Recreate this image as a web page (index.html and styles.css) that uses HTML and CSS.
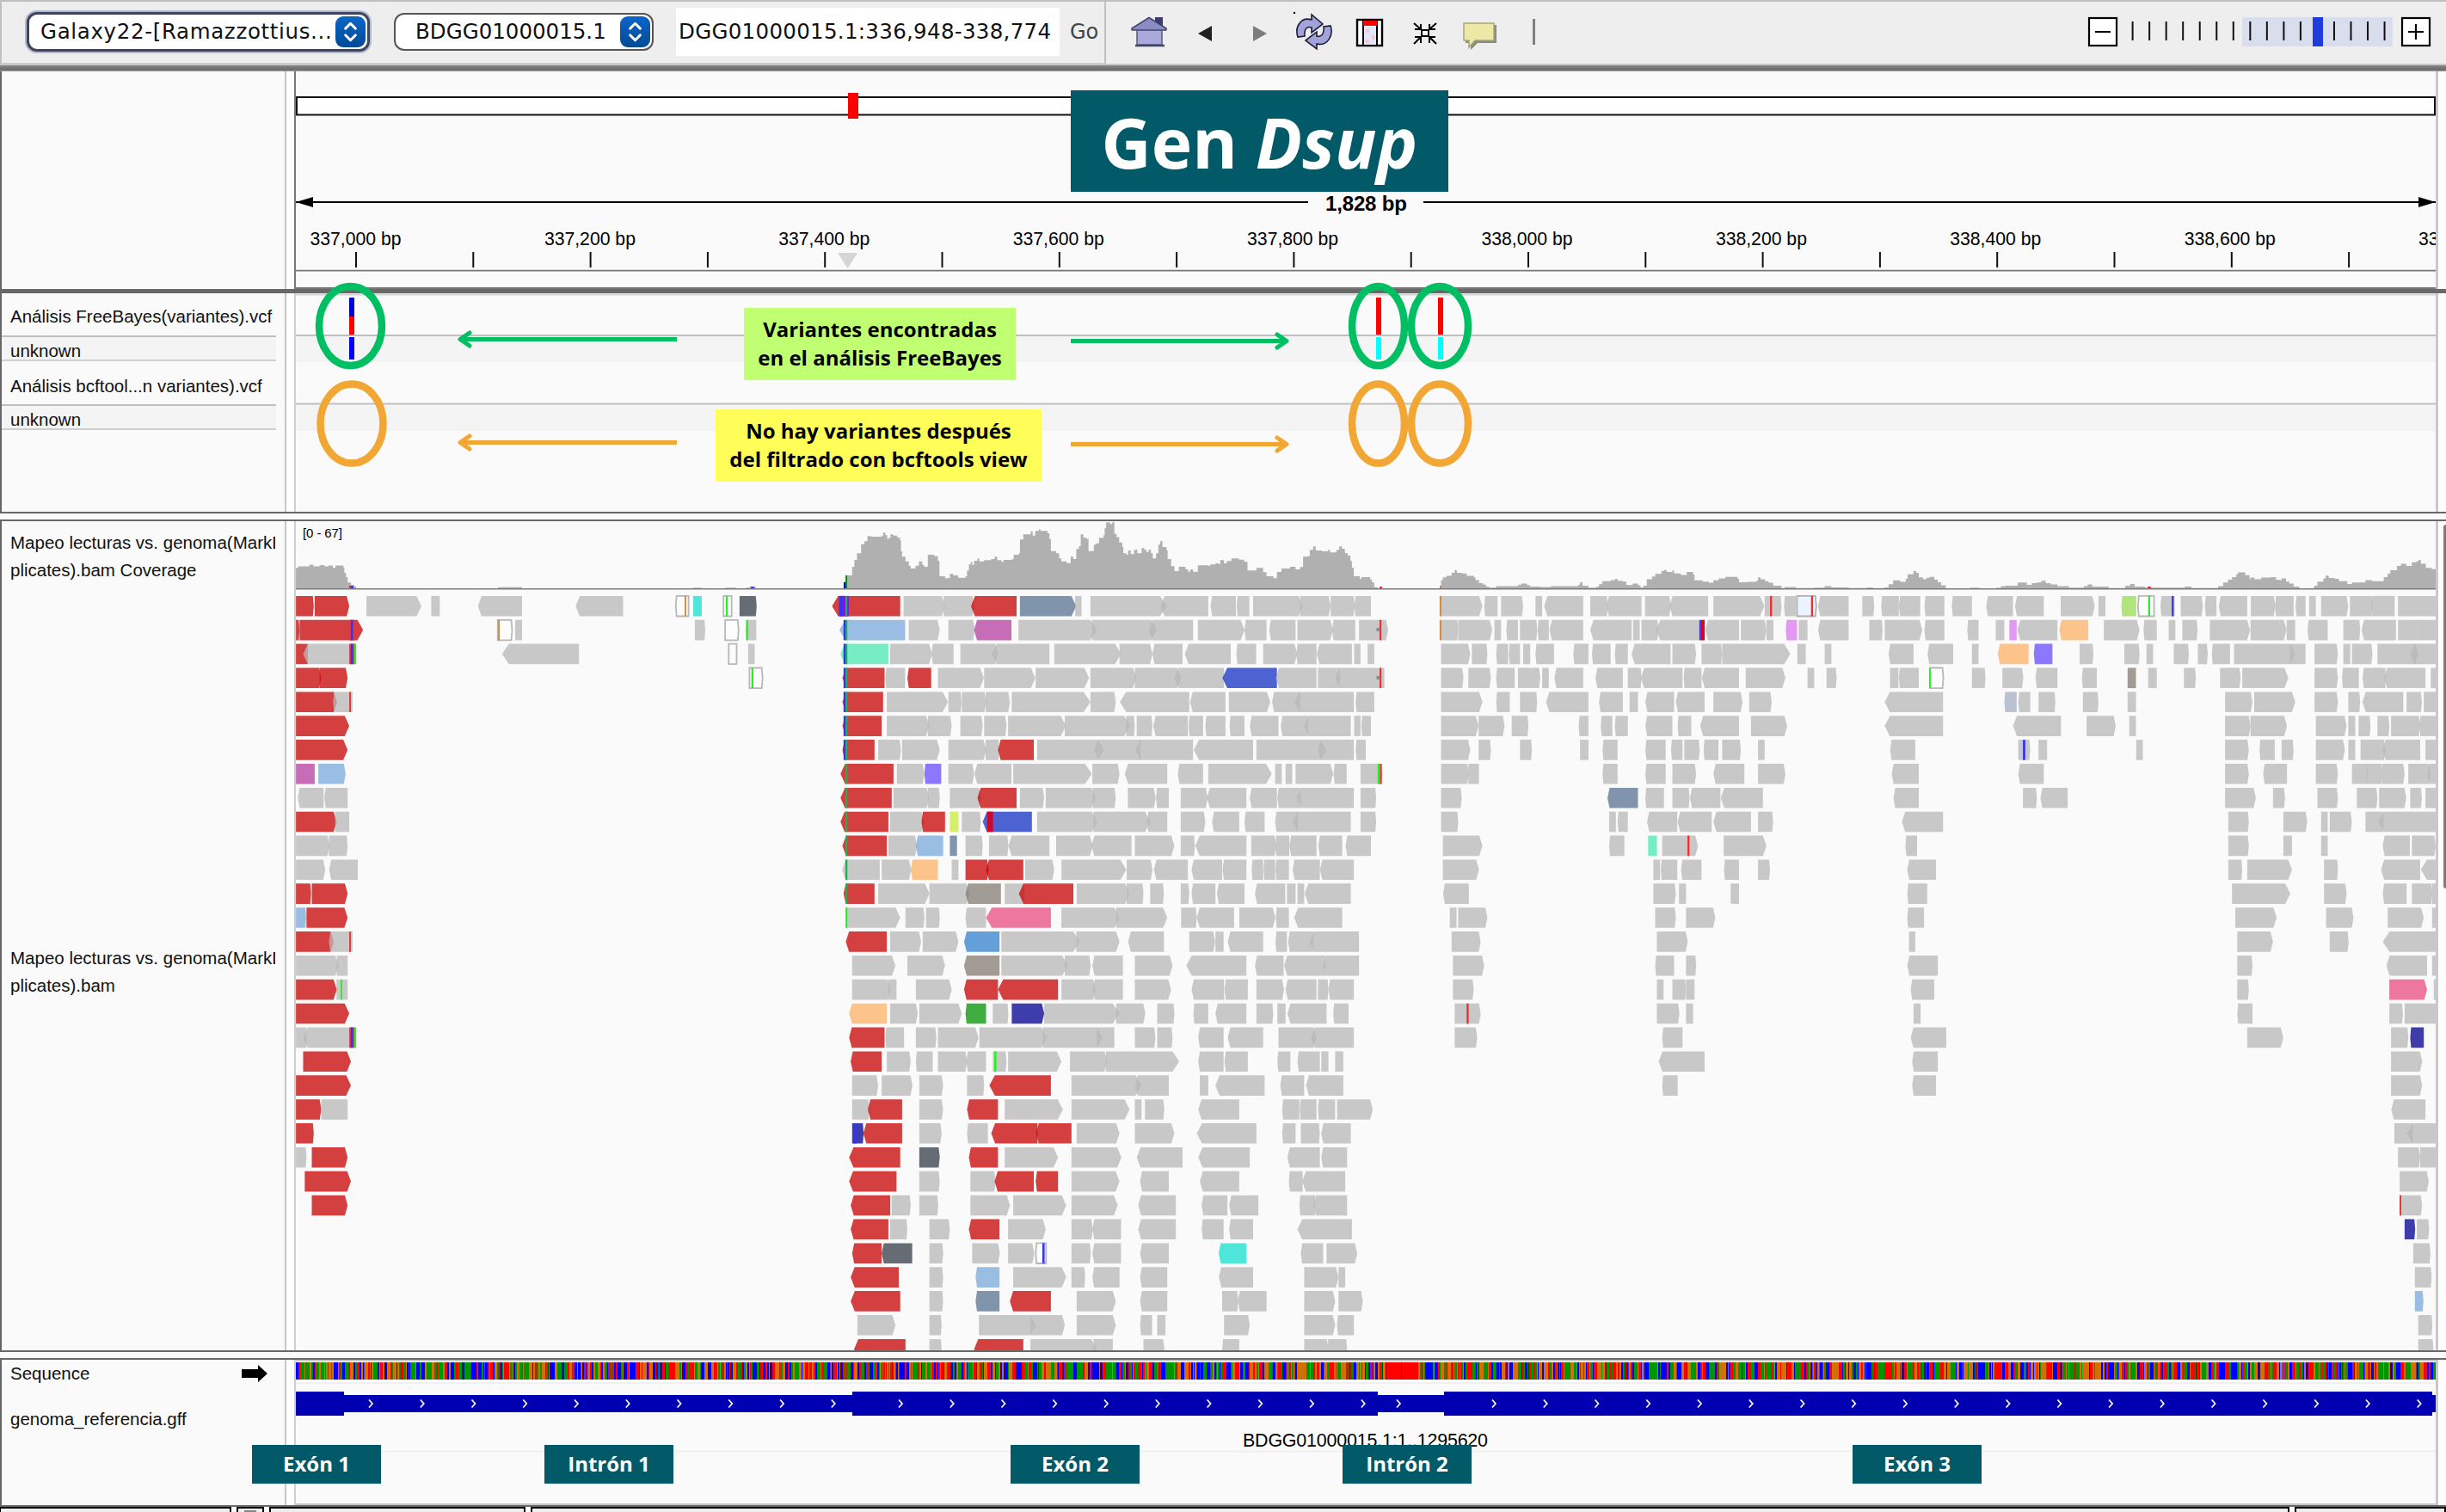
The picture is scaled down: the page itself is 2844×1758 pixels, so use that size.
FILE: index.html
```html
<!DOCTYPE html>
<html lang="es">
<head>
<meta charset="utf-8">
<title>IGV - Gen Dsup</title>
<link rel="stylesheet" href="styles.css">
</head>
<body>
<header class="toolbar">
  <div class="locator">
    <div class="combo combo-genome"><span class="combo-text genome-text">Galaxy22-[Ramazzottius...</span><span class="combo-knob"><svg viewBox="0 0 36 36"><path d="M12 14l6-6 6 6M12 22l6 6 6-6"/></svg></span></div>
    <div class="combo combo-chrom"><span class="combo-text">BDGG01000015.1</span><span class="combo-knob"><svg viewBox="0 0 36 36"><path d="M12 14l6-6 6 6M12 22l6 6 6-6"/></svg></span></div>
    <div class="locus"><span>DGG01000015.1:336,948-338,774</span></div>
    <span class="go">Go</span>
  </div>
  <svg class="icons" viewBox="1286 0 514 74" width="514" height="74">
    <g class="home">
      <path d="M1343 20h9v14h-9z" fill="#3c3c6e"/>
      <path d="M1322 34h29v18h-29z" fill="#a9a9dc" stroke="#5a5a80" stroke-width="1.500"/>
      <path d="M1336 20.500l20 12.500v2h-40v-2z" fill="#8c8cc4" stroke="#44446c" stroke-width="1.500" stroke-linejoin="round"/>
      <path d="M1320 53h34" stroke="#44446c" stroke-width="2.500"/>
    </g>
    <path d="M1393 39l16-9v18z" fill="#222"/>
    <path d="M1473 39l-16-9v18z" fill="#7d7d7d"/>
    <g fill="#a3a3da" stroke="#1d1d3c" stroke-width="1.600">
      <path d="M1509 43c-4-12 4-24 16-20v-6l13 11-13 10v-6c-6-2-9 3-8 10z"/>
      <path d="M1547 30c4 12-4 24-16 21v6l-13-10 13-10v5c6 2 9-4 8-11z"/>
    </g>
    <circle cx="1505" cy="15" r="1.200"/>
    <g>
      <rect x="1578" y="23" width="29" height="30" fill="#fff" stroke="#000" stroke-width="2.400"/>
      <path d="M1585 23v30M1601 23v30" stroke="#000" stroke-width="2"/>
      <rect x="1586" y="31" width="14" height="21" fill="#e4e4fa"/>
      <path d="M1588 34h4v4h-4zM1595 41h4v5h-4zM1588 46h4v4h-4z" fill="#f6c8c8"/>
      <rect x="1585" y="24" width="16" height="6" fill="#f00"/>
    </g>
    <g fill="none" stroke="#000" stroke-width="2">
      <rect x="1653" y="35" width="8" height="7" fill="#fff"/>
      <path d="M1644 27l8 7M1652 28v6h-7M1670 27l-8 7M1662 28v6h7M1644 51l8-8M1652 50v-7h-7M1670 51l-8-8M1662 50v-7h7"/>
    </g>
    <path d="M1704 29h36v21h-22l-8 8v-8h-6z" fill="#8b8b80"/>
    <path d="M1702 27h35v20h-22l-7 8v-8h-6z" fill="#ece8a6" stroke="#a9a67a" stroke-width="1.500"/>
    <path d="M1783.500 22v30" stroke="#808080" stroke-width="3"/>
  </svg>
  <svg class="zoomer" viewBox="2424 0 420 74" width="420" height="74">
    <rect x="2607" y="20" width="175" height="34" fill="#d8deed"/>
    <g id="zoom-ticks"></g>
    <rect x="2689" y="20" width="12" height="34" fill="#1f3bdc"/>
    <g fill="#fff" stroke="#000" stroke-width="2.200">
      <rect x="2429" y="21" width="32" height="32"/><rect x="2793" y="21" width="32" height="32"/>
      <path d="M2436 37h18M2800 37h18M2809 28v18"/>
    </g>
  </svg>
</header>
<div class="bar bar-top"></div>

<main class="panels">
  <section class="panel panel-ruler">
    <div class="names"></div><div class="split split-dark"></div>
    <svg class="data" viewBox="344 83 2488 253"><g id="ruler"></g></svg>
  </section>
  <div class="bar bar-mid"></div>
  <section class="panel panel-variants">
    <div class="names">
      <div class="name name-head">Análisis FreeBayes(variantes).vcf</div>
      <div class="name name-sub">unknown</div>
      <div class="name name-head">Análisis bcftool...n variantes).vcf</div>
      <div class="name name-sub">unknown</div>
    </div><div class="split"></div>
    <svg class="data" viewBox="344 341 2488 254">
      <path d="M344 342.500h2488" stroke="#d4d4d4" stroke-width="2"/>
      <path d="M344 391h2488v29h-2488zM344 470h2488v30h-2488z" fill="#f4f4f4"/>
      <path d="M344 390h2488M344 469.500h2488" stroke="#bfbfbf" stroke-width="2"/>
      <path d="M344 420h2488M344 500h2488" stroke="#eee"/>
      <path d="M406 346h6v22h-6z" fill="#0000d8"/>
      <path d="M406 368h6v21h-6zM1600 346h6v43h-6zM1672 346h6v43h-6z" fill="#f00"/>
      <path d="M406 392h6v26h-6z" fill="#00f"/>
      <path d="M1600 392h6v26h-6zM1672 392h6v26h-6z" fill="#0ff"/>
    </svg>
  </section>
  <div class="divider"></div>
  <section class="panel panel-reads">
    <div class="names">
      <div class="bam bam-cov">Mapeo lecturas vs. genoma(MarkD<br>plicates).bam Coverage</div>
      <div class="bam bam-reads">Mapeo lecturas vs. genoma(MarkD<br>plicates).bam</div>
    </div><div class="split"></div>
    <svg class="data" viewBox="344 606 2488 964">
      <text x="352" y="625" class="t-range" textLength="46">[0 - 67]</text>
      <g id="coverage"></g>
      <path d="M344 684.800h2488" stroke="#7d7d7d" stroke-width="1.600"/>
      <g id="reads"></g>
    </svg>
    <div class="scroll"><div class="thumb"></div></div>
  </section>
  <div class="divider"></div>
  <section class="panel panel-seq">
    <div class="names">
      <div class="seq-name"><span>Sequence</span><svg width="30" height="20" viewBox="0 0 30 20"><path d="M0 5h19v-5l11 10-11 10v-5h-19z"/></svg></div>
      <div class="gff-name">genoma_referencia.gff</div>
    </div><div class="split"></div>
    <svg class="data" viewBox="344 1581 2488 169">
      <path d="M344 1581h2488v26h-2488z" fill="#fff"/>
      <path d="M344 1582h2488M344 1749h2488" stroke="#c8c8c8" stroke-width="2"/>
      <path d="M344 1608h2488M344 1687.500h2488" stroke="#efefef" stroke-width="2"/>
      <g id="bases" shape-rendering="crispEdges"></g>
      <path d="M344 1618h56v4h591v-4h611v4h77v-4h1149v4h4v20h-4v4h-1149v-4h-77v4h-611v-4h-591v4h-56z" fill="#0000b2"/>
      <g id="chevrons"></g>
      <text x="1445" y="1681.500" class="t-label" textLength="285">BDGG01000015.1:1..1295620</text>
    </svg>
  </section>

  <div class="callouts">
    <div class="title-tag">Gen <em>Dsup</em></div>
    <div class="note note-green">Variantes encontradas<br>en el análisis FreeBayes</div>
    <div class="note note-yellow">No hay variantes después<br>del filtrado con bcftools view</div>
    <svg class="marks" viewBox="0 320 2844 240" width="2844" height="240">
      <g fill="none" stroke-width="8.500">
        <g stroke="#00bf63"><ellipse cx="407.500" cy="379" rx="36.500" ry="46"/><ellipse cx="1602.500" cy="379" rx="30.500" ry="46"/><ellipse cx="1674" cy="379" rx="33" ry="46"/></g>
        <g stroke="#f2a633"><ellipse cx="409" cy="492.500" rx="36.500" ry="46"/><ellipse cx="1602.500" cy="492.500" rx="30.500" ry="46"/><ellipse cx="1674" cy="492.500" rx="33" ry="46"/></g>
      </g>
      <g fill="none" stroke-width="5">
        <g stroke="#00bf63"><path d="M787 394.500H536"/><path d="M546 387l-11 7.500 11 7.500" stroke-linecap="round" stroke-linejoin="round"/><path d="M1245 396.500h250"/><path d="M1485 389l11 7.500-11 7.500" stroke-linecap="round" stroke-linejoin="round"/></g>
        <g stroke="#f2a633"><path d="M787 514.500H536"/><path d="M546 507l-11 7.500 11 7.500" stroke-linecap="round" stroke-linejoin="round"/><path d="M1245 516.500h250"/><path d="M1485 509l11 7.500-11 7.500" stroke-linecap="round" stroke-linejoin="round"/></g>
      </g>
    </svg>
    <div class="tag tag-e1">Exón 1</div>
    <div class="tag tag-i1">Intrón 1</div>
    <div class="tag tag-e2">Exón 2</div>
    <div class="tag tag-i2">Intrón 2</div>
    <div class="tag tag-e3">Exón 3</div>
  </div>
</main>
<footer class="status"><div class="cell c1"></div><div class="cell c2"><i></i></div><div class="cell c3"></div><div class="cell c4"></div><div class="cell c5"></div></footer>
<script src="tracks.js"></script>
</body>
</html>
```
FILE: styles.css
```css
* { box-sizing: border-box; }
body { margin: 0; width: 2844px; height: 1758px; overflow: hidden; background: #fafafa; color: #111; font-family: "Liberation Sans", Arial, sans-serif; display: flex; flex-direction: column; }
svg { display: block; }

.toolbar { height: 76px; flex: none; display: flex; background: #eee; border-top: 2px solid #c0c0c0; border-bottom: 2px solid #c8c8c8; font-family: "DejaVu Sans", sans-serif; }
.toolbar > svg { margin-top: -2px; }
.locator { width: 1286px; height: 72px; display: flex; align-items: center; border-left: 2px solid #c0c0c0; border-right: 2px solid #c0c0c0; border-bottom: 1px solid #ccc; padding: 0 6px 2px 29px; }
.combo { height: 44px; border: 2px solid #555; border-radius: 12px; background: #fff; display: flex; align-items: center; justify-content: space-between; padding-right: 2px; font-size: 24.500px; flex: none; }
.combo-genome { width: 399px; height: 46px; border: 3px solid #3d4560; box-shadow: 0 0 0 2px #b4b8cc; padding-left: 13px; }
.combo-chrom { width: 302px; margin-left: 28px; padding-left: 23px; }
.combo-text { white-space: nowrap; }
.genome-text { letter-spacing: 0.650px; }
.combo-knob { width: 35px; height: 36px; flex: none; border-radius: 9px; background: linear-gradient(#0a66c8, #024a94); }
.combo-knob svg { width: 35px; height: 36px; fill: none; stroke: #fff; stroke-width: 3; stroke-linecap: round; stroke-linejoin: round; }
.locus { width: 446px; height: 56px; margin-left: 26px; flex: none; background: #fff; display: flex; align-items: center; padding-left: 3px; font-size: 24.500px; letter-spacing: 0.300px; white-space: nowrap; }
.go { margin-left: 12px; font-size: 24px; color: #444; }
.icons { margin-right: 624px; flex: none; }
.zoomer { flex: none; }

.bar { flex: none; }
.bar-top { height: 7px; background: linear-gradient(#858585, #6a6a6a 75%, #aaa); }
.bar-mid { height: 5px; background: #686868; }
.panels { position: relative; height: 1667px; flex: none; display: flex; flex-direction: column; }
.panel { display: flex; flex: none; background: #fff; }
.names { width: 331px; flex: none; border-left: 2px solid #666; background: #fafafa; font-size: 20.500px; }
.split { width: 13px; flex: none; background: #fff; border-left: 2px solid #c6c6c6; border-right: 2px solid #cfcfcf; }
.split-dark { border-right-color: #777; }
.data { width: 2488px; flex: none; background: #fafafa; box-shadow: 3px 0 0 #c8c8c8; }
.panel-ruler { height: 253px; }
.panel-variants { height: 254px; }
.panel-reads { height: 964px; }
.panel-seq { height: 169px; }
.divider { height: 11px; border: solid #686868; border-width: 2px 0; background: #fafafa; flex: none; }

.name { white-space: nowrap; padding-left: 10px; width: 319px; }
.name-head { height: 49px; padding-top: 15px; }
.name-sub { height: 30px; border-top: 2px solid #bfbfbf; border-bottom: 2px solid #cfcfcf; background: #f4f4f4; line-height: 31px; }
.name-sub + .name-head { padding-top: 17px; height: 50px; }
.bam { width: 318px; padding-left: 10px; overflow: hidden; white-space: nowrap; line-height: 32px; }
.bam-cov { height: 80px; padding-top: 9px; }
.bam-reads { margin-top: 412px; }
.scroll { width: 12px; display: flex; justify-content: flex-end; padding-top: 4px; }
.thumb { width: 3px; height: 423px; border-radius: 3px 0 0 3px; background: #7c7c7c; }
.seq-name { display: flex; padding: 2px 20px 0 10px; justify-content: space-between; align-items: center; height: 30px; }
.gff-name { padding: 27px 0 0 10px; }

.t-tick { font-size: 21.200px; text-anchor: middle; }
.t-span { font-size: 24px; font-weight: bold; }
.t-range { font-size: 15px; }
.t-label { font-size: 21.400px; }

.callouts { position: absolute; left: 0; top: -83px; font-family: "Open Sans", sans-serif; font-weight: 700; }
.callouts > * { position: absolute; }
.marks { left: 0; top: 320px; }
.title-tag { left: 1245px; top: 105px; width: 439px; height: 118px; background: #025a69; color: #fff; font-size: 80.300px; line-height: 120px; text-align: center; white-space: nowrap; }
.note { height: 84px; color: #000; font-size: 24px; line-height: 33.300px; text-align: center; padding-top: 8px; white-space: nowrap; }
.note-green { left: 865px; top: 358px; width: 316px; background: #c0ff72; }
.note-yellow { left: 832px; top: 476px; width: 379px; background: #fffe58; }
.tag { top: 1680px; width: 150px; height: 45px; background: #025a69; color: #fff; font-size: 24px; line-height: 44px; text-align: center; }
.tag-e1 { left: 293px; }
.tag-i1 { left: 633px; }
.tag-e2 { left: 1175px; }
.tag-i2 { left: 1561px; }
.tag-e3 { left: 2154px; }

.status { height: 8px; flex: none; display: flex; gap: 6px; border-top: 2px solid #6a6a6a; background: #fff; }
.cell { border: 2px solid #000; border-bottom: 0; background: #eee; }
.c1 { width: 269px; border-left-width: 1px; }
.c2 { width: 32px; padding: 2px 7px; }
.c2 i { display: block; height: 2px; background: #888; }
.c3 { width: 298px; }
.c4 { width: 2045px; }
.c5 { flex: 1; }

.r { fill-opacity: .76; }
.r- { fill: rgb(184,184,184); }
.r-r { fill: rgb(200,4,4); }
.r-l { fill: rgb(124,170,221); }
.r-p { fill: rgb(183,64,163); }
.r-c { fill: rgb(25,224,208); }
.r-d { fill: rgb(55,63,74); }
.r-s { fill: rgb(89,117,147); }
.r-m { fill: rgb(76,233,179); }
.r-b { fill: rgb(24,51,197); }
.r-v { fill: rgb(105,79,255); }
.r-y { fill: rgb(203,234,60); }
.r-o { fill: rgb(253,178,104); }
.r-t { fill: rgb(134,125,116); }
.r-k { fill: rgb(234,78,132); }
.r-e { fill: rgb(53,130,208); }
.r-g { fill: rgb(5,149,5); }
.r-n { fill: rgb(4,1,146); }
.r-u { fill: rgb(217,122,239); }
.r-i { fill: rgb(154,222,84); }
.r-w { fill: rgb(166,175,195); }
.r-O { fill: #fcfcfc; stroke: #b8b8b8; stroke-width: 1.800; }
.r-W { fill: #eaf3ff; stroke: #b0b0b0; stroke-width: 1.800; }
.m-R { fill: #f03030; }
.m-B { fill: #3434ee; }
.m-G { fill: #26f026; }
.m-D { fill: #12b84a; }
.m-A { fill: #d18a3c; }
.m-C { fill: #cc0830; }
.m-V { fill: #7a18e0; }
.m-K { fill: #8a8a8a; }
.base-A { fill: #009600; }
.base-C { fill: #00f; }
.base-G { fill: #d17105; }
.base-T { fill: #f00; }
```
FILE: tracks.js
```js
const NS = 'http://www.w3.org/2000/svg';
const byId = id => document.getElementById(id);
function add(parent, tag, attrs, text) {
  const el = document.createElementNS(NS, tag);
  for (const k in attrs) el.setAttribute(k, attrs[k]);
  if (text) el.textContent = text;
  parent.appendChild(el);
  return el;
}

/* zoom slider ticks */
for (let i = 0; i < 16; i++) {
  if (i !== 11) add(byId('zoom-ticks'), 'rect', { x: 2478.6 + i * 19.53, y: 25, width: 2, height: 22, fill: '#111' });
}

/* ruler: ideogram, span and ticks */
const ruler = byId('ruler');
add(ruler, 'rect', { x: 345, y: 113, width: 2486, height: 20.5, fill: '#fff', stroke: '#111', 'stroke-width': 2 });
add(ruler, 'rect', { x: 986, y: 108, width: 12, height: 30, fill: '#f00' });
add(ruler, 'path', { d: 'M344 235h1177M1655 235h1177', stroke: '#000', 'stroke-width': 2 });
add(ruler, 'path', { d: 'M344 235l20-6v12zM2832 235l-20-6v12z' });
add(ruler, 'text', { x: 1541, y: 245, class: 't-span', textLength: 95 }, '1,828 bp');
for (let i = 0; i < 18; i++) add(ruler, 'rect', { x: 413 + i * 136.3, y: 293, width: 2, height: 18, fill: '#111' });
for (let i = 0; i < 10; i++) {
  const bp = 337000 + i * 200;
  add(ruler, 'text', { x: 413.5 + i * 272.4, y: 285, class: 't-tick' }, bp.toLocaleString('en-US') + ' bp');
}
add(ruler, 'path', { d: 'M974 294h23l-11.5 18z', fill: '#d5d5d5' });
add(ruler, 'path', { d: 'M344 314.7h2488M344 335h2488', stroke: '#777', 'stroke-width': 1.8 });

/* Alignment tiles. x0/k place a tile's local x axis; each row packs reads as
   start, strand (< > or - for none), end, colour; "|" is a mismatch mark. */
const tiles = [
{ x0: 320, k: 2.6133, first: 0, rows: [
'63>117r 120>225r 277>444 474-500 616<750 913<1057 1217<1256O 1270-1296c 1362-1387O 1411>1463d 1244|1249A 1369|1375G',
'63>74r 74>267r 676>720O 729-750 1275>1307 1367>1408O 1429<1462 225|241R 230|236B 677|682A 1431|1437G',
'63-99r 85<246 689<923 1378-1402O 1437-1457 225|241R 230|236B 240|246G',
'63>139r 135>220r 1441>1481O 1447|1453G',
'63>188r 176<235 225|230R','63>225r','63>220r','63-120p 131>214l','69<147 149<220','63>187r 182-225','63>166 163>220','63>152 164<251',
'63>109r 111>220r','63>94l 95>220r','63>178r 163<235 225|230R','63>193 187-220','63>187r 186-220 199|204G','63>225r',
'63-95 85<246 225|241R 230|236B 240|246G','85>230r','63>230r','63>140r 140-220','63>117r','63>95 111>220r','90>230r','111>220r'] },
{ x0: 960, k: 2.3059, first: 0, rows: [
'17<200r 209>320 316>399 390<512r 521>672s 669-686 710>915 898<1026 1032<1100 1102<1136 1146>1279 1272>1354 1354>1419 1418<1462 36|62V 37|45B 53|58D',
'37<213l 223>306 329>400 398<498p 517>728 714>888 866<985 998>1123 1123<1182 1189<1260 1265>1360 1358<1420 1430>1508 48|53B 53|58D 1485|1490R',
'40<168m 173>286 284<343 361>462 445<600 613>792 788>876 876<957 963<1086 1101<1154 1173>1264 1262<1316 1317<1411 1417-1434 1453-1471 48|53B 53|58D',
'45<158r 160<213 219<283r 301>424 425>562 563>706 710>834 829>953 935<1068 1064<1210b 1207<1316 1320>1380 1366<1498 48|53B 53|58D 1485|1490R',
'45<154r 164>328 329>364 365>430 429>494 499>710 710>778 789<975 977<1072 1081>1192 1197<1272 1257<1416 1421<1471 48|53B 53|58D',
'45<150r 164>278 274>338 361>421 425>485 489>644 641>816 806>829 834>876 878<971 973<1012 1018<1072 1083<1123 1137<1214 1220<1293 1284<1408 1417-1434 1436<1462 48|53B 53|58D',
'45<131r 141>202 205>306 329>431 429>466 462<558r 567>746 720<845 830<985 987<1146 1155>1343 1320<1416 1421<1448 48|53B 53|58D',
'40<182r 191>265 265<310v 329>398 399<498 503>714 715>788 802<916 944<1012 1026>1196 1205-1223 1233-1251 1260>1361 1362<1397 1434>1493 53|58D 1480|1486G 1486|1491R',
'40<177r 182>278 274>306 333>417 407<512r 521>586 590>724 716>778 810>885 886<920 952>1024 1022<1128 1137<1210 1211<1274 1262<1416 1434>1476 53|58D',
'40<168r 173>264 257<320r 333-356y 365>416 421<553b 567>728 718>870 862<916 952>1018 1036<1109 1123<1177 1205<1266 1252<1408 1434>1476 53|58D 433|449C',
'45<164r 168>245 242<315l 333-352s 375>421 438>490 490<600 618>716 712<820 829>935 952>990 991<1128 1141>1208 1206<1243 1243<1316 1321<1385 1394<1462 53|58D',
'45<145 150>229 228<301o 338-356 375>437r 430<530r 535>613 632>806 807>876 880<971 981<1063 1064<1128 1142<1173 1174<1205 1206<1242 1252<1325 1325<1416 53|58D',
'48<131r 141>278 278>386 375<470t 480>534 518<664r 673>815 807>852 870>907 952>975 981<1045 1049<1123 1151<1232 1237-1260 1265-1283 1284<1408 53|58D',
'55>200 214>265 269>306 375<430 430<604k 632>788 779>916 953>995 995<1095 1109>1206 1207<1242 1256<1385 53|58G',
'54<164r 173>256 260>356 371<466e 471>682 672>788 811<907 975>1044 1045-1067 1078<1173 1206<1237 1240<1308 1298<1430',
'71>187 219>320 371<466t 471>650 641>711 715<797 829>930 967<1128 1151<1228 1229<1340 1334<1430',
'71>174 168-190 242>338 371<462r 462<623r 632>724 716<797 829>926 981<1068 1069<1132 1155>1229 1233<1316 1320>1348 1348<1416',
'63<164o 173>247 251>365 375<430g 448>490 499>586n 586>788 779>857 889>935 986<1026 1045<1128 1155>1200 1211-1233 1238<1343 1361<1402',
'63<158r 160<210 242>297 301>410 412>595 582>742 726<774 829>884 889>930 999<1067 1078<1173 1214>1316 1302<1416',
'67<150r 164>228 242<287 301>380 378<430 448>485 489>632 655>755 751>948 999<1067 1069<1132 1211<1246 1265<1325 1329-1348 1366-1388 452|458G',
'71>141 150>233 251>315 379>425 439<604r 659>848 830<920 1003-1026 1045<1177 1219<1283 1288<1388',
'71>117 113<205r 251>315 379<462r 480>636 659>815 829-847 856>908 999<1109 1224<1270 1271<1316 1320<1366 1371>1467',
'71>102n 101<205r 251>311 379<435 444<568r 564<659r 673>788 829>935 995<1155 1224<1260 1274>1325 1329<1408 75|81B',
'63<200r 251>306d 384<462r 480>623 659>793 834<957 999<1137 1238<1325 1329<1398',
'63<190r 251>306 388>456 453<558r 563<623r 659>788 843<920 1003<1109 1242<1279 1278<1393',
'67<173r 177>228 251>302 388>494 503>645 659>783 838<939 1008<1077 1082<1160 1270<1312 1308<1398',
'67<168r 173>219 278>333 384<466r 489>590 659>716 715<792 838<939 1008<1067 1082<1146 1265<1411',
'71<150r 150<232d 278>315 393>467 489>559 563<591O 659>711 715<792 843<920 1054<1128c 1274<1334 1343>1425 581|587B',
'67<196r 278>315 402<466l 503>645 659>696 715<788 843<916 1054<1146 1283>1375 1375-1393',
'67<200r 278>315 402<466s 494<604r 673>778 843<916 1063>1106 1105<1182 1283>1366 1375>1440',
'85>187 278>311 411>563 549>641 673>778 843<875 889-911 1068>1137 1283>1366 1371<1416',
'76<214r 278>311 398<530r 549>728 718-770 852>908 1063<1109 1283>1348 1347>1398'] },
{ x0: 1640, k: 2.45, first: 0, rows: [
'87>205 210<248 258>321 356-375 381<492 512>562 558<658 668>742 738<848 863>1008 1009>1057 1064<1098 1101>1156W 1161<1248 1287>1321 1341<1391 1391<1452 1464<1521 83|88A 1024|1030R 1141|1147R',
'87>136 136>233 239-258 273<306 312>361 362<394 396<492 512<630 634-653 658>706 700<838 840<936 941>1014 1014-1034 1069<1101u 1106-1131 1161<1248 1307>1345 1351>1458 1464<1521 83|88A 823|828B 828|838C',
'87>170 175>219 244<278 280<312 321-341 356<409 464<507 517<570 582<619 630<741 746>814 829>888 888>1082 1102-1126 1180-1199 1362<1433 1473<1546',
'87>151 165>229 244<297 306>370 375-394 410<492 527<605 619>658 656<775 778<829 830<936 955>1068 1131-1150 1185>1214 1366-1390 1391<1448 1480>1518O 1477|1482G',
'87>205 244<283 312>361 386<507 537<605 624-648 669<751 756<838 863>946 965>1029 1351<1517',
'87>194 194>268 288>336 479<507 542<575 582<619 669<746 761<800 825<936 970>1073 1351<1517',
'87>170 194>229 312>346 483-507 547<590 669<727 742<775 780>824 835<877 888>941 990-1009 1366<1438',
'87>167 165-195 547<590 669<727 746>814 863<951 990>1068 1371<1448',
'87>146 561<648s 669<722 746>795 796<883 884<1004 1376<1448',
'87>136 566-585 590<619 674<760 761<858 863<970 990>1033 1400<1517',
'92>205 566<609 677-702m 717>819 892>1014 1410<1443 789|795R',
'92>195 692-711 713<760 771<829 893<936 990>1024 1415<1497',
'93<166 692>756 765-785 912-936 1415<1472','112-131 136>219 697>756 785>868 1415<1463','117>200 702>790 1420-1438',
'121>210 697<751 785>814 1415<1502','121>180 702-721 746>785 785-809 1425<1492','126>200 702>766 785-805 1433-1453 160|166R',
'126>190 717<775 1425<1526','707<838 1429<1502','717<761 1429<1497'] },
{ x0: 2240, k: 2.596, first: 0, rows: [
'76<137 180<261 267<354 405>508 519-540 588<633i 638<687O 706<749 767>834 840<875 882<968 979>1053 1052<1108 1114<1144 1155-1175 1191>1273 1278>1347 1344-1413 1423-1550 669|675G 740|746B',
'123<157 209-235 250-272u 274<395 401<488o 535>643 655<695 731-751 772>818 855>977 978>1087 1087-1113 1150<1211 1258>1309 1313<1417 1423-1496 1495-1550',
'137-157 215<308o 324<380v 462>504 597>643 664-684 746>792 819>849 861<916 928>1113 1097-1144 1171>1242 1258-1279 1284>1346 1361>1485 1461<1600',
'137>178 229>292 329<395 469<514 607-632t 669-695 777>813 886>948 953>1092 1171>1242 1254<1305 1316<1385 1380<1506 1522-1550',
'235<272w 277<313 338>389 472>519 607-632 901>984 989>1113 1171>1242 1273>1309 1316<1439 1449>1495 1501-1550',
'261<406 483>571 612-632 901>978 978>1088 1175>1268 1273-1294 1304>1340 1361>1397 1402>1492 1490-1550',
'277>313 338-364 633-653 901>973 1005<1051 1072>1108 1175>1263 1273-1294 1310>1386 1377<1490 1506-1550 291|298B',
'277<354 901>973 1016<1088 1175>1242 1284>1332 1329>1377 1376>1443 1454>1521 1512<1600',
'291>333 344<426 901>994 1046>1082 1180>1242 1299>1361 1366>1448 1460>1495 1506-1550',
'911>973 1077>1149 1191-1211 1217>1284 1325-1380 1362<1600',
'911>973 1077-1103 1191-1211 1377<1459 1465>1537','911>953 968>1103 1200>1242 1372<1490 1492<1700',
'922>1098 1200>1268 1377<1449 1465>1527 1526-1550','932>1057 1206>1289 1392>1501 1526-1550','938>1046 1217>1274 1377<1600',
'938>984 1388<1511 1526-1550','938>973 1397>1511k 1531-1550','938<984 1397>1438 1443-1550','968>1077 1402>1454 1460<1501n',
'1402>1496','1402>1496','1403<1506','1412-1468 1450<1650','1423>1490 1490-1550','1428>1516','1428>1496 1428|1433R',
'1443>1475n 1480>1517','1469>1521','1474>1525','1474>1500l','1484>1527','1484>1530'] }
];
const reads = byId('reads');
for (const t of tiles) t.rows.forEach((row, i) => {
  const y = +(692.9 + (t.first + i) * 27.87).toFixed(1), h = 23.6;
  for (const item of row.split(' ')) {
    const [, a, kind, b, col] = item.match(/^(\d+)([<>|-])(\d+)(\w?)$/);
    const x1 = t.x0 + a / t.k, x2 = t.x0 + b / t.k, f = v => v.toFixed(1);
    if (kind === '|') { add(reads, 'rect', { x: f(x1), y, width: f(x2 - x1), height: h, class: 'm-' + col }); continue; }
    const len = x2 - x1, tip = kind === '-' ? 0 : Math.max(1, Math.min(8, len * 0.105 - 1.2));
    const l = kind === '<' ? tip : 0, r = kind === '>' ? tip : 0;
    add(reads, 'path', { class: (/[OW]/.test(col) ? '' : 'r ') + 'r-' + col,
      d: `M${f(x1 + l)} ${y}H${f(x2 - r)}L${f(x2)} ${f(y + h / 2)}L${f(x2 - r)} ${f(y + h)}H${f(x1 + l)}L${f(x1)} ${f(y + h / 2)}Z` });
  }
});
/* small deletions beside the second variant */
add(reads, 'rect', { x: 1600.5, y: 730, width: 4, height: 4, class: 'm-K' });
add(reads, 'rect', { x: 1600.5, y: 786, width: 4, height: 4, class: 'm-K' });

/* coverage histogram steps: x,y pairs in each tile's own axis */
const cov = [
{ x0: 320, k: 2.6133, ky: 1.8667, end: 246, p: '63,131 70,128 104,124 116,128 135,125 150,128 162,126 175,131 183,126 207,130 210,142 215,151 220,163 230,168 240,172' },
{ x0: 320, k: 2.6133, ky: 1.8667, end: 750, p: '677,173' },
{ x0: 320, k: 2.6133, ky: 1.8667, end: 1460, p: '1270,174 1296,176 1368,174 1400,176 1430,174 1441,172' },
{ x0: 960, k: 2.3059, ky: 3, end: 1480, p: '48,262 53,237 71,207 77,183 84,160 95,128 104,118 112,100 122,102 150,100 154,88 160,97 165,110 169,106 174,94 181,98 192,105 199,115 202,153 205,172 214,188 223,204 228,213 241,203 250,188 259,200 264,207 274,165 292,170 301,187 305,240 320,247 333,232 342,237 355,245 375,240 379,220 384,199 389,190 393,200 398,186 407,178 412,188 425,184 444,180 453,172 460,184 471,190 477,183 500,180 504,165 518,160 521,112 530,94 550,83 555,98 562,82 572,76 576,82 595,90 600,110 604,152 618,160 626,178 632,188 646,194 657,172 664,180 672,145 679,135 684,94 691,106 700,110 705,152 719,130 725,125 733,106 745,96 748,72 752,52 762,58 768,52 774,92 780,104 787,122 795,138 798,160 806,165 811,150 818,163 827,148 836,160 847,142 854,148 860,155 866,148 872,160 877,178 886,160 892,130 897,118 903,138 914,150 917,180 926,205 935,222 947,207 965,216 972,224 978,216 985,224 998,202 1025,203 1031,199 1045,195 1054,198 1058,184 1068,195 1076,187 1088,178 1108,182 1122,190 1131,220 1155,211 1173,226 1182,240 1200,247 1210,225 1222,213 1245,207 1260,216 1272,208 1280,172 1292,170 1298,148 1307,136 1314,150 1330,153 1347,148 1352,157 1370,148 1377,136 1384,144 1392,160 1400,168 1407,187 1411,210 1416,240 1432,250 1436,243 1460,252 1465,262 1471,278' },
{ x0: 1640, k: 2.45, ky: 2.24, end: 1525, p: '83,205 87,190 92,182 102,178 117,170 126,163 132,170 146,172 160,178 180,182 185,189 195,197 207,201 215,206 224,209 244,205 307,201 316,198 332,203 341,206 370,207 400,205 478,201 483,195 490,204 507,209 520,209 530,206 537,200 546,192 570,189 582,186 590,191 605,193 615,202 633,198 648,203 655,208 663,204 673,187 688,180 697,173 715,166 722,163 730,168 746,164 751,172 770,176 787,168 805,175 809,190 832,193 850,196 863,190 878,185 897,181 932,186 936,195 960,194 985,191 990,182 997,187 1010,192 1020,196 1033,204 1057,210 1066,207 1098,210 1150,209 1180,205 1199,208 1248,210 1300,208 1318,210 1350,208 1362,200 1375,190 1395,194 1411,186 1416,174 1433,165 1440,170 1448,182 1460,187 1470,183 1480,181 1492,188 1502,195 1512,203' },
{ x0: 2240, k: 2.596, ky: 1.8667, end: 1537, p: '130,174 160,176 210,174 225,171 240,170 275,163 303,168 318,164 333,163 347,159 360,164 375,167 395,171 430,174 475,171 487,167 500,172 550,175 600,170 615,166 628,172 660,174 730,174 780,172 800,175 860,175 880,171 895,163 910,157 922,151 935,145 940,141 962,147 975,156 978,152 990,156 1010,152 1040,151 1055,157 1065,158 1072,154 1085,161 1095,165 1108,172 1125,176 1165,175 1170,170 1180,161 1198,154 1205,148 1214,153 1232,155 1245,160 1270,166 1285,163 1325,158 1345,160 1380,151 1392,144 1400,136 1420,127 1432,122 1448,127 1465,119 1478,117 1485,114 1492,122 1507,131 1525,134' }
];
for (const c of cov) {
  let d = '';
  c.p.split(' ').forEach((s, i) => {
    const [x, y] = s.split(',').map(Number), X = (c.x0 + x / c.k).toFixed(1);
    d += (i ? 'H' + X : 'M' + X + ' 684.5') + 'V' + (590 + y / c.ky).toFixed(1);
  });
  add(byId('coverage'), 'path', { d: d + 'H' + (c.x0 + c.end / c.k).toFixed(1) + 'V684.5Z', fill: '#b0b0b0' });
}
[[981, 677, 2, '#00f'], [983, 669, 2, '#009600'], [1604, 682, 3, '#e33'], [406, 681, 5, '#f22'], [408, 682, 3, '#33f'], [873, 682, 4, '#44e'], [1674, 681, 2, '#d18a3c'], [2497, 682, 4, '#e33']]
  .forEach(([x, y, w, fill]) => add(byId('coverage'), 'rect', { x, y, width: w, height: 684.5 - y, fill }));

/* reference bases, 1.361 px each */
let seed = 336948;
const paths = { A: '', C: '', G: '', T: '' };
let prev = 'T';
for (let i = 0; i < 1828; i++) {
  seed = (seed * 1103515245 + 12345) % 2147483648;
  const r = seed / 2147483648, x = 344 + i * 1.361;
  let b = r < 0.22 ? prev : 'ACGT'[Math.floor((r - 0.22) / 0.195) & 3];
  if (x > 1629 && x < 1646) b = 'T';
  prev = b;
  paths[b] += `M${x.toFixed(2)} 1584h1.37v20h-1.37z`;
}
for (const b in paths) add(byId('bases'), 'path', { d: paths[b], class: 'base-' + b });

/* strand chevrons on the gene model */
const chev = [1626];
for (let i = 0; i < 10; i++) chev.push(431 + i * 59.76, 1047 + i * 59.76);
for (let i = 0; i < 19; i++) chev.push(1737 + i * 59.76);
let cd = '';
for (const x of chev) cd += `M${(x - 2).toFixed(1)} 1627.5l4 4.5-4 4.5`;
add(byId('chevrons'), 'path', { d: cd, fill: 'none', stroke: '#fff', 'stroke-width': 1.7 });
```
